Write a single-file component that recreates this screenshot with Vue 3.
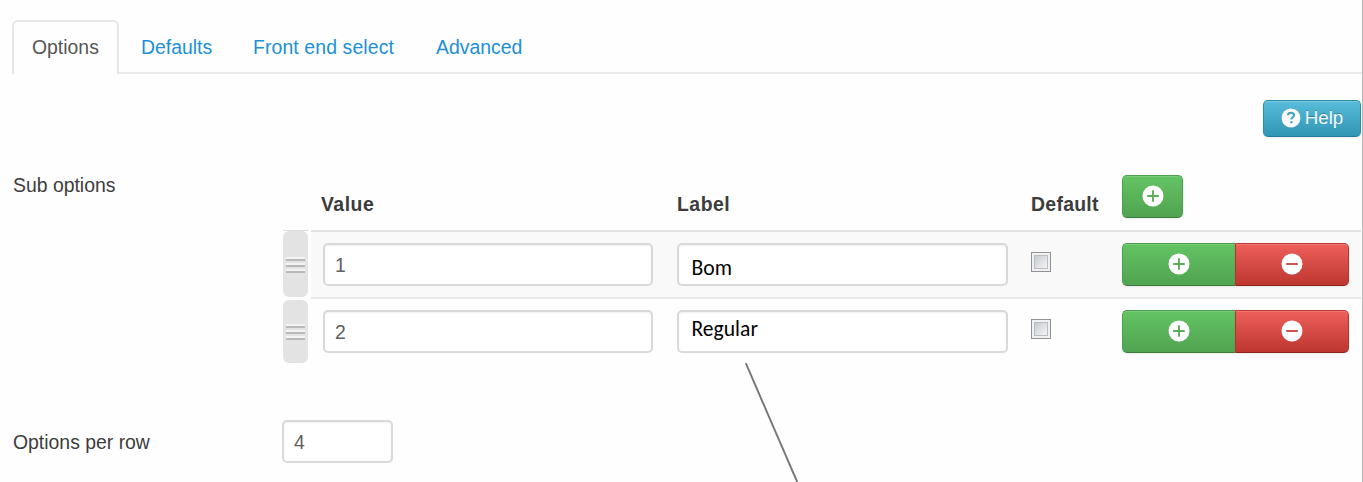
<script setup>
import { ref } from 'vue'

const tabs = ['Options', 'Defaults', 'Front end select', 'Advanced']
const rows = ref([
  { value: '1', label: 'Bom' },
  { value: '2', label: 'Regular' },
])
</script>

<template>
  <main class="page">
    <nav class="tabs">
      <a v-for="(tab, i) in tabs" :key="tab" :class="['tab', `tab-${i}`, { active: i === 0 }]"><span>{{ tab }}</span></a>
    </nav>

    <div class="toolbar">
      <button class="btn help">
        <svg width="20" height="20" viewBox="0 0 20 20">
          <circle cx="10" cy="10" r="9.4" fill="#fff" />
          <path d="M6.9 7.2C7 5.4 8.3 4.7 10 4.7c1.8 0 3.1.9 3.1 2.5 0 2.2-2.7 2-2.7 4.2" fill="none" stroke="#3fa3c4" stroke-width="2" />
          <rect x="9.3" y="13.2" width="2.2" height="2.1" fill="#3fa3c4" />
        </svg>
        <span>Help</span>
      </button>
    </div>

    <section class="sub">
      <div class="caption">Sub options</div>
      <div class="table">
        <div class="row head">
          <div class="handle-cell"></div>
          <div class="cells">
            <strong>Value</strong>
            <strong>Label</strong>
            <strong>Default</strong>
            <button class="btn green single">
              <svg width="22" height="22" viewBox="0 0 22 22">
                <circle cx="11" cy="11" r="10.5" fill="#fff" />
                <path d="M5.2 11h11.6M11 5.2v11.6" stroke="#5aae5a" stroke-width="1.9" />
              </svg>
            </button>
          </div>
        </div>
        <div v-for="(row, i) in rows" :key="i" :class="['row', 'item', `item-${i}`]">
          <div class="handle-cell">
            <div class="handle"><i></i><i></i><i></i></div>
          </div>
          <div class="cells">
            <div class="field">{{ row.value }}</div>
            <div class="field typed"><span>{{ row.label }}</span></div>
            <div class="check"><i></i></div>
            <div class="group">
              <button class="btn green">
                <svg width="22" height="22" viewBox="0 0 22 22">
                  <circle cx="11" cy="11" r="10.5" fill="#fff" />
                  <path d="M5.2 11h11.6M11 5.2v11.6" stroke="#5aae5a" stroke-width="1.9" />
                </svg>
              </button>
              <button class="btn red">
                <svg width="22" height="22" viewBox="0 0 22 22">
                  <circle cx="11" cy="11" r="10.5" fill="#fff" />
                  <path d="M5.2 11h11.6" stroke="#cb4a46" stroke-width="1.9" />
                </svg>
              </button>
            </div>
          </div>
        </div>
      </div>
    </section>

    <section class="per-row">
      <div class="caption">Options per row</div>
      <div class="field small">4</div>
    </section>

    <svg class="pointer" width="60" height="122" viewBox="0 0 60 122">
      <path d="M5.8 3.2 57.2 122" stroke="#777" stroke-width="1.9" />
    </svg>
  </main>
</template>

<style>
body {
  background: #fefefe;
  overflow: hidden;
}
</style>

<style scoped>
.page {
  position: relative;
  box-sizing: border-box;
  width: 1363px;
  height: 482px;
  padding: 20px 0 0 12px;
  border-right: 1px solid #b5b5b5;
  overflow: hidden;
  font-family: "Liberation Sans", Arial, sans-serif;
  font-size: 19.4px;
  line-height: 24px;
  color: #3c3c3c;
}
.tabs {
  display: flex;
  height: 54px;
  box-sizing: border-box;
  border-bottom: 2px solid #e8e8e8;
}
.tab {
  box-sizing: border-box;
  height: 52px;
  padding-top: 15px;
  color: #2090d4;
  white-space: nowrap;
}
.tab.active {
  width: 107px;
  height: 54px;
  padding: 13px 0 0 18px;
  border: 2px solid #e6e6e6;
  border-bottom: 0;
  border-radius: 6px 6px 0 0;
  background: #fefefe;
  color: #555;
}
.tab-1 { width: 112px; margin-left: 22px; }
.tab-2 { width: 183px; letter-spacing: .12px; }
.toolbar {
  display: flex;
  justify-content: flex-end;
  padding: 26px 1px 0 0;
}
.btn {
  display: flex;
  align-items: center;
  justify-content: center;
  box-sizing: border-box;
  margin: 0;
  padding: 0 0 2px;
  border: 1px solid;
  border-radius: 5px;
  font-family: inherit;
}
.btn svg { display: block; }
.help {
  width: 98px;
  height: 37px;
  gap: 4px;
  border-color: #2a8dac #2a8dac #257d99;
  background: linear-gradient(#57bddb, #3096b4);
  box-shadow: inset 0 1px 0 rgba(255, 255, 255, .2), 0 1px 2px rgba(0, 0, 0, .08);
  color: #f4fafc;
  font-size: 18.8px;
  text-shadow: 0 -1px 0 rgba(0, 0, 0, .25);
}
.green {
  border-color: #4b9f4b #4b9f4b #397d39;
  background: linear-gradient(#63c463, #51a351);
  box-shadow: inset 0 1px 0 rgba(255, 255, 255, .15), 0 1px 2px rgba(0, 0, 0, .08);
}
.red {
  border-color: #bd3934 #b5322d #8d2420;
  background: linear-gradient(#ee5f5b, #bd362f);
  box-shadow: inset 0 1px 0 rgba(255, 255, 255, .15), 0 1px 2px rgba(0, 0, 0, .08);
}
.sub {
  display: flex;
  padding-top: 36px;
}
.caption {
  box-sizing: border-box;
  width: 271px;
  padding-left: 1px;
  flex: none;
}
.table {
  width: 1078px;
  padding-top: 1px;
}
.row {
  display: flex;
}
.handle-cell {
  box-sizing: border-box;
  width: 25px;
  margin-right: 3px;
  flex: none;
}
.cells {
  display: grid;
  grid-template-columns: 354px 354px 91px 239px;
  box-sizing: border-box;
  width: 1050px;
  padding-left: 12px;
  flex: none;
}
.head {
  height: 56px;
}
.head strong {
  padding-top: 18px;
  letter-spacing: .5px;
}
.head strong:first-child { margin-left: -2px; }
.head strong:nth-child(3) { letter-spacing: .3px; }
.single {
  width: 61px;
  height: 43px;
  margin-top: 1px;
}
.item .cells {
  padding-top: 11px;
  border-top: 2px solid #e3e3e3;
}
.item-0 {
  height: 67px;
}
.item-0 .cells {
  background: #f9f9f9;
}
.item-0 .handle-cell {
  border-top: 1px solid #dadada;
}
.item-1 .handle-cell {
  padding-top: 3px;
}
.item-1 .cells { border-top-color: #e8e8e8; }
.handle {
  display: flex;
  flex-direction: column;
  gap: 4px;
  box-sizing: border-box;
  height: 66px;
  padding: 28px 3px 0;
  border-radius: 6px;
  background: #e3e3e3;
}
.item-1 .handle {
  height: 63px;
  padding-top: 26px;
}
.handle i {
  height: 2px;
  background: #b9b9bc;
  box-shadow: 0 -2px 0 #f3f3f3;
}
.field {
  box-sizing: border-box;
  width: 330px;
  height: 43px;
  padding: 8px 10px;
  border: 2px solid #d9d9d9;
  border-radius: 5px;
  background: #fff;
  box-shadow: inset 0 1px 2px rgba(0, 0, 0, .06);
  color: #606060;
}
.typed {
  width: 331px;
  padding: 11px 13px;
  margin-left: -.5px;
  color: #000;
  font-family: Carlito, "Open Sans", "Noto Sans", sans-serif;
  font-size: 21.6px;
}
.item-1 .typed {
  padding-top: 5px;
}
.check {
  box-sizing: border-box;
  width: 20px;
  height: 20px;
  margin-top: 9px;
  padding: 2px;
  border: 1px solid #929292;
  background: #f1f1f1;
}
.check i {
  display: block;
  box-sizing: border-box;
  width: 14px;
  height: 14px;
  border: 1px solid #b9bcc3;
  background: linear-gradient(135deg, #c7cbd2, #f4f4f4);
}
.group {
  display: flex;
  height: 43px;
}
.group .green {
  width: 113px;
  border-right: 0;
  border-radius: 5px 0 0 5px;
}
.group .red {
  width: 114px;
  border-radius: 0 5px 5px 0;
}
.per-row {
  display: flex;
  margin-top: 57px;
}
.per-row .caption {
  width: 270px;
  padding-top: 10px;
}
.small {
  width: 111px;
}
.pointer {
  position: absolute;
  left: 740px;
  top: 360px;
}
</style>
